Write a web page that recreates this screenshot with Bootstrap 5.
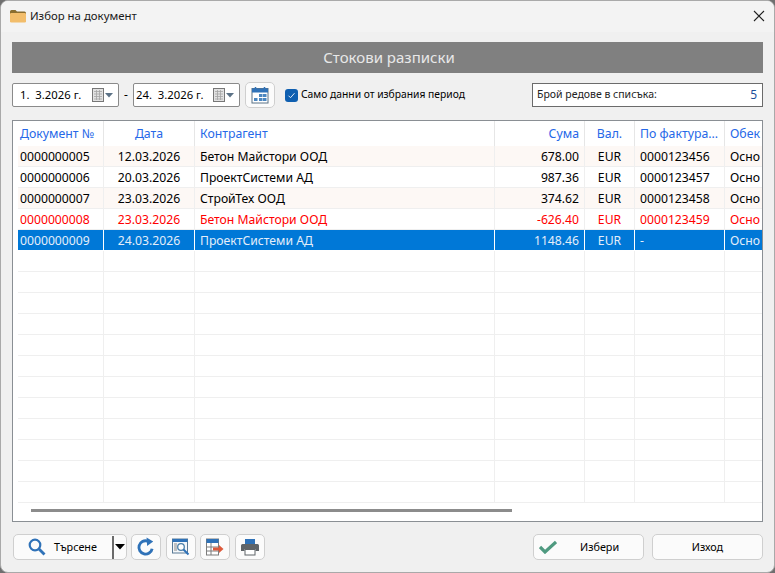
<!DOCTYPE html>
<html lang="bg">
<head>
    <meta charset="UTF-8">
    <meta name="viewport" content="width=device-width, initial-scale=1.0">
    <title>Избор на документ</title>
    <link href="https://cdn.jsdelivr.net/npm/bootstrap@5.3.0/dist/css/bootstrap.min.css" rel="stylesheet">
    <style>
        html, body {
            height: 100%;
            background-color: #6f6f6f;
        }
        body {
            font-family: "Noto Sans", "Open Sans", sans-serif;
            font-size: 12px;
            color: #000;
            overflow: hidden;
        }
        .app-window {
            width: 775px;
            height: 573px;
            background-color: #f0f0f0;
            border: 1px solid #a9a9a9;
            border-radius: 8px;
            overflow: hidden;
        }
        .title-bar {
            height: 31px;
            padding: 0 9px 2px 9px;
            background-color: #f3f3f3;
            color: #1a1a1a;
            font-size: 11.4px;
        }
        .title-ico { margin-right: 4px; }
        .window-body {
            padding: 10px 11px 0 11px;
        }
        .doc-band {
            height: 31px;
            padding-left: 3px;
            background-color: #808080;
            color: #e8e8e8;
            font-size: 15px;
        }
        .filter-row {
            height: 24px;
            margin-top: 10px;
        }
        .date-box {
            width: 107px;
            height: 24px;
            background: #fff;
            border: 1px solid #8a8a8a;
            border-radius: 2px;
            padding: 0 5px 0 7px;
            font-size: 11.300px;
        }
        .date-box-tight { padding-left: 2px; }
        .date-dash { width: 14px; text-align: center; }
        .tool-btn {
            background: #fbfbfb;
            border: 1px solid #cfcfcf;
            border-radius: 5px;
            padding: 0;
        }
        .tool-square { width: 30px; height: 26px; }
        .cal-btn { margin-left: 5px; }
        .check-box {
            width: 13px;
            height: 13px;
            margin: 0 3px 0 10px;
            background-color: #0f5fb0;
            border-radius: 3px;
        }
        .check-label { font-size: 10.300px; }
        .rows-count {
            width: 231px;
            height: 24px;
            background: #fff;
            border: 1px solid #6b6b6b;
            padding: 0 5px 0 4px;
            font-size: 10.500px;
            color: #222;
        }
        .rows-count b {
            font-weight: 400;
            color: #1c4f9c;
            font-size: 12px;
        }
        .grid-frame {
            position: relative;
            height: 402px;
            margin-top: 13px;
            background: #fff;
            border: 1px solid #8a8f94;
            padding-left: 5px;
            overflow: hidden;
        }
        .doc-table {
            table-layout: fixed;
            width: 744px;
            border-collapse: separate;
            border-spacing: 0;
        }
        .doc-table th {
            height: 25px;
            padding: 2px 3px 0 3px;
            font-weight: 400;
            font-size: 12.300px;
            color: #2668e8;
            border-right: 1px solid #e6e6e6;
            white-space: nowrap;
            overflow: hidden;
        }
        .doc-table td {
            height: 21px;
            padding: 2px 3px 0 3px;
            border-right: 1px solid #efefef;
            border-bottom: 1px solid #efefef;
            white-space: nowrap;
            overflow: hidden;
            line-height: 1;
            font-size: 12.200px;
        }
        .doc-table th:first-child, .doc-table td:first-child { padding-left: 2px; }
        .doc-table th:last-child, .doc-table td:last-child { border-right: 0; padding-right: 0; }
        .doc-table th.pad-r, .doc-table td.pad-r { padding-right: 5px; }
        .doc-table th.pad-l, .doc-table td.pad-l { padding-left: 5px; }
        .row-tint td { background-color: #fdf8f5; }
        .row-red td { color: #f00; }
        .row-active td { background-color: #0078d7; color: #e4eefa; border-bottom-color: #fff; border-right-color: #fff; }
        .grid-scroll {
            position: absolute;
            left: 18px;
            bottom: 9px;
            width: 481px;
            height: 3px;
            background-color: #8c8c8c;
        }
        .action-row {
            margin-top: 12px;
            height: 26px;
            padding-left: 1px;
        }
        .search-btn { width: 114px; height: 26px; font-size: 10.800px; }
        .search-ico { margin-left: 14px; }
        .search-text { margin-left: 8px; }
        .search-split {
            width: 2px;
            height: 23px;
            background-color: #6b6b6b;
        }
        .search-caret { margin: 0 1px; }
        .refresh-btn { margin-left: 4px; }
        .tool-gap { margin-left: 5px; }
        .tool-gap-sm { margin-left: 4px; }
        .main-btn { width: 111px; height: 26px; font-size: 10.800px; }
        .ok-ico { margin-left: 5px; }
        .ok-text { margin-left: 23px; }
        .exit-btn { margin-left: 8px; }
    </style>
</head>
<body>
    <div class="app-window d-flex flex-column">
        <div class="title-bar d-flex align-items-center">
            <svg width="16" height="14" viewBox="0 0 16 14" class="title-ico">
                <path d="M0 2.5A1.5 1.5 0 0 1 1.5 1h4L7 2.5h7.5A1.5 1.5 0 0 1 16 4v1H0z" fill="#8a6d2f"/>
                <rect x="0" y="4" width="16" height="9.5" rx="1.3" fill="#f2bd6b"/>
            </svg>
            <span>Избор на документ</span>
            <svg width="12" height="12" viewBox="0 0 12 12" class="ms-auto">
                <path d="M1 1l10 10M11 1L1 11" stroke="#222" stroke-width="1.1"/>
            </svg>
        </div>
        <div class="window-body">
            <div class="doc-band d-flex align-items-center justify-content-center">Стокови разписки</div>

            <div class="filter-row d-flex align-items-center">
                <div class="date-box d-flex align-items-center">
                    <span>1.&nbsp; 3.2026 г.</span>
                    <svg width="21" height="15" viewBox="0 0 21 15" class="ms-auto">
                        <rect x="0.5" y="0.5" width="11" height="13" fill="#e2e2e2" stroke="#777"/>
                        <path d="M2 3.5h8M2 6h8M2 8.500h8M2 11h8M4.500 2v10M7.500 2v10" stroke="#a5a5a5" stroke-width="0.8"/>
                        <path d="M13 5h8l-4 4.500z" fill="#5c7286"/>
                    </svg>
                </div>
                <div class="date-dash">-</div>
                <div class="date-box date-box-tight d-flex align-items-center">
                    <span>24.&nbsp; 3.2026 г.</span>
                    <svg width="21" height="15" viewBox="0 0 21 15" class="ms-auto">
                        <rect x="0.5" y="0.5" width="11" height="13" fill="#e2e2e2" stroke="#777"/>
                        <path d="M2 3.5h8M2 6h8M2 8.500h8M2 11h8M4.500 2v10M7.500 2v10" stroke="#a5a5a5" stroke-width="0.8"/>
                        <path d="M13 5h8l-4 4.500z" fill="#5c7286"/>
                    </svg>
                </div>
                <button type="button" class="tool-btn tool-square cal-btn d-flex align-items-center justify-content-center">
                    <svg width="18" height="18" viewBox="0 0 18 18">
                        <rect x="1" y="2.500" width="16" height="14.500" fill="#fff" stroke="#5b7286"/>
                        <rect x="1" y="2.500" width="16" height="4" fill="#2f72b8"/>
                        <path d="M4.500 1v3M13.500 1v3" stroke="#2f72b8" stroke-width="1.500"/>
                        <path d="M8 8h3.500v3H8zM12 8h3.500v3H12zM3 12h3.500v3H3zM8 12h3.500v3H8zM12 12h3.500v3H12z" fill="#4a86c0"/>
                    </svg>
                </button>
                <div class="check-box d-flex align-items-center justify-content-center">
                    <svg width="9" height="9" viewBox="0 0 9 9"><path d="M1.500 4.700l2 2 4-4.500" fill="none" stroke="#dbe8f6" stroke-width="1"/></svg>
                </div>
                <span class="check-label">Само данни от избрания период</span>
                <div class="rows-count d-flex align-items-center justify-content-between ms-auto">
                    <span>Брой редове в списъка:</span><b>5</b>
                </div>
            </div>

            <div class="grid-frame">
                <table class="doc-table">
                    <colgroup>
                        <col style="width:86px"><col style="width:91px"><col style="width:300px"><col style="width:90px"><col style="width:50px"><col style="width:90px"><col style="width:37px">
                    </colgroup>
                    <thead>
                        <tr>
                            <th>Документ №</th>
                            <th class="text-center">Дата</th>
                            <th class="pad-l">Контрагент</th>
                            <th class="text-end pad-r">Сума</th>
                            <th class="text-center">Вал.</th>
                            <th class="pad-l">По фактура...</th>
                            <th class="pad-l">Обек</th>
                        </tr>
                    </thead>
                    <tbody id="docRows"></tbody>
                </table>
                <div class="grid-scroll"></div>
            </div>

            <div class="action-row d-flex align-items-center">
                <button type="button" class="tool-btn search-btn d-flex align-items-center">
                    <svg width="18" height="18" viewBox="0 0 18 18" class="search-ico">
                        <circle cx="7" cy="7" r="5.300" fill="none" stroke="#2f72b8" stroke-width="2.200"/>
                        <path d="M11 11l5.500 5.500" stroke="#2f72b8" stroke-width="2.800"/>
                    </svg>
                    <span class="search-text">Търсене</span>
                    <span class="search-split ms-auto"></span>
                    <svg width="10" height="6" viewBox="0 0 10 6" class="search-caret"><path d="M0 0h10L5 5.500z" fill="#000"/></svg>
                </button>
                <button type="button" class="tool-btn tool-square refresh-btn d-flex align-items-center justify-content-center">
                    <svg width="20" height="20" viewBox="0 0 18 18">
                        <path d="M14.500 10.500A6 6 0 1 1 10.500 3.700" fill="none" stroke="#2f72b8" stroke-width="2.600"/>
                        <path d="M9.500 0.500l6 3.500-5.500 4z" fill="#2f72b8"/>
                    </svg>
                </button>
                <button type="button" class="tool-btn tool-square tool-gap d-flex align-items-center justify-content-center">
                    <svg width="18" height="18" viewBox="0 0 18 18">
                        <rect x="0.500" y="1" width="15" height="14" fill="#f4f7fa" stroke="#5a7a96"/>
                        <rect x="0.500" y="1" width="15" height="3" fill="#2f72b8"/>
                        <path d="M2 6h3M2 8h3M2 10h3M2 12h3" stroke="#8a8a8a"/>
                        <circle cx="9" cy="9" r="3.300" fill="#fff" stroke="#4a7ea8" stroke-width="1.300"/>
                        <path d="M11.500 11.500l5 5" stroke="#2f72b8" stroke-width="2"/>
                    </svg>
                </button>
                <button type="button" class="tool-btn tool-square tool-gap-sm d-flex align-items-center justify-content-center">
                    <svg width="18" height="18" viewBox="0 0 18 18">
                        <rect x="0.500" y="1" width="12" height="16" fill="#fff" stroke="#7c7c7c"/>
                        <rect x="0.500" y="1" width="12" height="4" fill="#2f72b8"/>
                        <path d="M0.500 9h12M0.500 13h12M5 5v12" stroke="#7c7c7c"/>
                        <path d="M7 9.500h6V7l4.500 4-4.500 4v-2.500H7z" fill="#dd5a3c"/>
                    </svg>
                </button>
                <button type="button" class="tool-btn tool-square tool-gap d-flex align-items-center justify-content-center">
                    <svg width="20" height="18" viewBox="0 0 20 18">
                        <path d="M5 1h10v5H5z" fill="#2f72b8"/>
                        <path d="M2.500 6h15A1.500 1.500 0 0 1 19 7.500V13h-3.500v-2h-11v2H1V7.500A1.500 1.500 0 0 1 2.500 6z" fill="#5f6468"/>
                        <rect x="5" y="11.500" width="10" height="5.500" fill="#fff" stroke="#5f6468"/>
                    </svg>
                </button>
                <button type="button" class="tool-btn main-btn d-flex align-items-center ms-auto">
                    <svg width="18" height="14" viewBox="0 0 18 14" class="ok-ico"><path d="M1 7l5 5 11-10" fill="none" stroke="#4f9a80" stroke-width="3.200"/></svg>
                    <span class="ok-text">Избери</span>
                </button>
                <button type="button" class="tool-btn main-btn exit-btn d-flex align-items-center justify-content-center">Изход</button>
            </div>
        </div>
    </div>

    <script src="https://cdn.jsdelivr.net/npm/bootstrap@5.3.0/dist/js/bootstrap.bundle.min.js"></script>
    <script>
        const docs = [
            ['0000000005', '12.03.2026', 'Бетон Майстори ООД', '678.00', '0000123456', 'row-tint'],
            ['0000000006', '20.03.2026', 'ПроектСистеми АД', '987.36', '0000123457', ''],
            ['0000000007', '23.03.2026', 'СтройТех ООД', '374.62', '0000123458', 'row-tint'],
            ['0000000008', '23.03.2026', 'Бетон Майстори ООД', '-626.40', '0000123459', 'row-red'],
            ['0000000009', '24.03.2026', 'ПроектСистеми АД', '1148.46', '-', 'row-active']
        ];
        let rows = '';
        docs.forEach(d => {
            rows += `<tr class="${d[5]}"><td>${d[0]}</td><td class="text-center">${d[1]}</td><td class="pad-l">${d[2]}</td><td class="text-end pad-r">${d[3]}</td><td class="text-center">EUR</td><td class="pad-l">${d[4]}</td><td class="pad-l">Осно</td></tr>`;
        });
        // empty rows down to the scrollbar
        for (let i = 0; i < 12; i++) {
            rows += '<tr><td></td><td></td><td></td><td></td><td></td><td></td><td></td></tr>';
        }
        document.getElementById('docRows').innerHTML = rows;
    </script>
</body>
</html>
